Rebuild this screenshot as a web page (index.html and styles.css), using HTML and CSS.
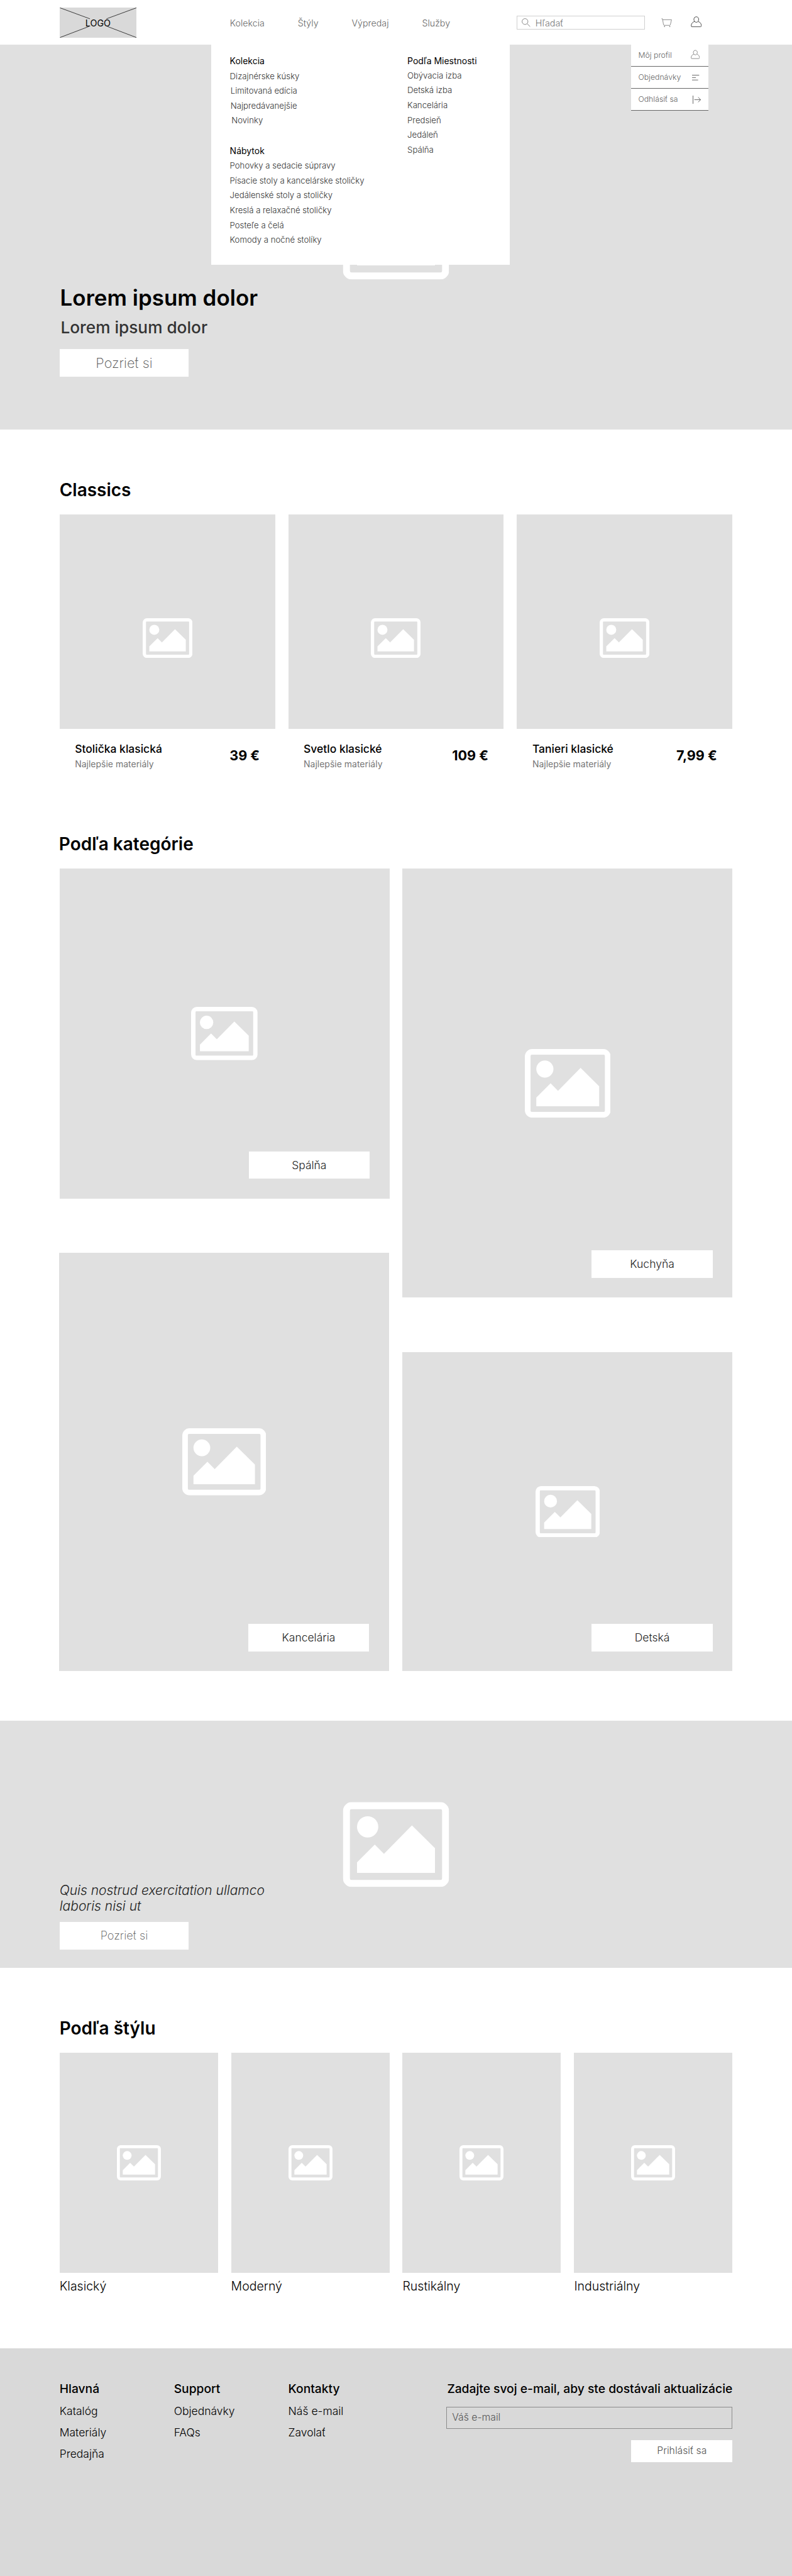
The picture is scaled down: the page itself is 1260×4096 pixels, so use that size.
FILE: index.html
```html
<!DOCTYPE html>
<html lang="sk">
<head>
<meta charset="utf-8">
<title>Nábytok</title>
<link rel="stylesheet" href="styles.css">
</head>
<body>
<svg class="defs" aria-hidden="true">
  <symbol id="picture" viewBox="0 0 15 12">
    <path fill="#fff" fill-rule="evenodd" d="M1.3 0H13.7A1.3 1.3 0 0 1 15 1.3V10.7A1.3 1.3 0 0 1 13.7 12H1.3A1.3 1.3 0 0 1 0 10.7V1.3A1.3 1.3 0 0 1 1.3 0ZM1.2 1A.2.2 0 0 0 1 1.2V10.8A.2.2 0 0 0 1.2 11H13.8A.2.2 0 0 0 14 10.8V1.2A.2.2 0 0 0 13.8 1Z"/>
    <circle cx="3.5" cy="3.5" r="1.5" fill="#fff"/>
    <path fill="#fff" d="M2 8.5 4.5 6 5.8 7.3 9.75 3.3 13 6.5V10H2Z"/>
  </symbol>
  <symbol id="user" viewBox="0 0 20 20">
    <path fill="none" stroke="currentColor" d="M10 .8C7.4 .8 5.6 2.9 5.6 5.5S7.4 10.8 10 10.8 14.400 8.100 14.400 5.5 12.600 .8 10 .8ZM6.600 9.600C2.800 10.300 .8 13.500 .8 17.300 .8 18.300 1.300 19 2.300 19H17.700C18.700 19 19.200 18.300 19.200 17.300 19.200 13.500 17.200 10.300 13.400 9.600"/>
  </symbol>
</svg>

<header class="header">
  <div class="wrap header-row">
    <a class="logo">
      <svg class="logo-lines" viewBox="0 0 140 55"><path d="M.5 .5 55 20.500M139.500 .5 85 20.500M.5 54.500 53 34.500M139.500 54.500 87 34.500" stroke="#222" fill="none"/></svg>
      <span>LOGO</span>
    </a>
    <nav class="nav"><a>Kolekcia</a><a>Štýly</a><a>Výpredaj</a><a>Služby</a></nav>
    <div class="search">
      <svg class="search-icon" viewBox="0 0 16 16"><circle cx="6" cy="6" r="5.300"/><path d="M9.800 9.800 15.300 15.300"/></svg>
      <span>Hľadať</span>
    </div>
    <svg class="cart-icon" viewBox="0 0 20 16"><path d="M.5 1H2.300L4 11.300Q4.300 12.900 5.700 12.900H15.200Q16.200 12.900 16.500 11.900L18.700 2.700H2.700"/><circle class="dot" cx="6" cy="15" r="1"/><circle class="dot" cx="15.500" cy="15" r="1"/></svg>
    <svg class="user-icon"><use href="#user"/></svg>
  </div>

  <div class="mega">
    <div class="mega-col">
      <h4>Kolekcia</h4>
      <a>Dizajnérske kúsky</a><a class="in1">Limitovaná edícia</a><a class="in1">Najpredávanejšie</a><a class="in2">Novinky</a>
      <h4 class="second">Nábytok</h4>
      <a>Pohovky a sedacie súpravy</a><a>Písacie stoly a kancelárske stoličky</a><a>Jedálenské stoly a stoličky</a><a>Kreslá a relaxačné stoličky</a><a>Posteľe a čelá</a><a>Komody a nočné stolíky</a>
    </div>
    <div class="mega-col rooms">
      <h4>Podľa Miestnosti</h4>
      <a>Obývacia izba</a><a>Detská izba</a><a>Kancelária</a><a>Predsieň</a><a>Jedáleň</a><a>Spálňa</a>
    </div>
  </div>

  <div class="account">
    <a><span>Môj profil</span><svg class="i-user"><use href="#user"/></svg></a>
    <a><span>Objednávky</span><svg class="i-list" viewBox="0 0 13 10"><path d="M0 .6H13M0 5H7M0 9.400H11"/></svg></a>
    <a><span>Odhlásiť sa</span><svg class="i-out" viewBox="0 0 15 15"><path d="M.6 0V15M3 7.500H14.500M10 3 14.500 7.500 10 12"/></svg></a>
  </div>
</header>

<section class="hero">
  <svg class="pic"><use href="#picture"/></svg>
  <div class="wrap hero-text">
    <h1>Lorem ipsum dolor</h1>
    <h2>Lorem ipsum dolor</h2>
    <a class="cta big">Pozrieť si</a>
  </div>
</section>

<section class="wrap classics">
  <h3>Classics</h3>
  <div class="products">
    <article><div class="thumb"><svg class="pic"><use href="#picture"/></svg></div><div class="info"><div class="label"><b>Stolička klasická</b><small>Najlepšie materiály</small></div><strong>39 €</strong></div></article>
    <article><div class="thumb"><svg class="pic"><use href="#picture"/></svg></div><div class="info"><div class="label"><b>Svetlo klasické</b><small>Najlepšie materiály</small></div><strong>109 €</strong></div></article>
    <article><div class="thumb"><svg class="pic"><use href="#picture"/></svg></div><div class="info"><div class="label"><b>Tanieri klasické</b><small>Najlepšie materiály</small></div><strong>7,99 €</strong></div></article>
  </div>
</section>

<section class="wrap categories">
  <h3>Podľa kategórie</h3>
  <div class="cat-grid">
    <div class="cat-col">
      <div class="cat bedroom"><svg class="pic"><use href="#picture"/></svg><a>Spálňa</a></div>
      <div class="cat office"><svg class="pic"><use href="#picture"/></svg><a>Kancelária</a></div>
    </div>
    <div class="cat-col">
      <div class="cat kitchen"><svg class="pic"><use href="#picture"/></svg><a>Kuchyňa</a></div>
      <div class="cat kids"><svg class="pic"><use href="#picture"/></svg><a>Detská</a></div>
    </div>
  </div>
</section>

<section class="banner">
  <svg class="pic"><use href="#picture"/></svg>
  <div class="wrap banner-text">
    <p>Quis nostrud exercitation ullamco<br>laboris nisi ut</p>
    <a class="cta">Pozrieť si</a>
  </div>
</section>

<section class="wrap looks">
  <h3>Podľa štýlu</h3>
  <div class="look-grid">
    <figure><div class="thumb"><svg class="pic"><use href="#picture"/></svg></div><figcaption>Klasický</figcaption></figure>
    <figure><div class="thumb"><svg class="pic"><use href="#picture"/></svg></div><figcaption>Moderný</figcaption></figure>
    <figure><div class="thumb"><svg class="pic"><use href="#picture"/></svg></div><figcaption>Rustikálny</figcaption></figure>
    <figure><div class="thumb"><svg class="pic"><use href="#picture"/></svg></div><figcaption>Industriálny</figcaption></figure>
  </div>
</section>

<footer class="footer">
  <div class="wrap footer-row">
    <div class="links"><h5>Hlavná</h5><a>Katalóg</a><a>Materiály</a><a>Predajňa</a></div>
    <div class="links"><h5>Support</h5><a>Objednávky</a><a>FAQs</a></div>
    <div class="links"><h5>Kontakty</h5><a>Náš e-mail</a><a>Zavolať</a></div>
    <form class="signup"><h5>Zadajte svoj e-mail, aby ste dostávali aktualizácie</h5><div class="field">Váš e-mail</div><a class="submit">Prihlásiť sa</a></form>
  </div>
</footer>
</body>
</html>
```
FILE: styles.css
```css
/* 1rem is ten design units of the 1440-wide layout */
html { font-size: 8.7465px; }
* { box-sizing: border-box; margin: 0; padding: 0; }
body { background: #fff; color: #000; font: 400 1.6rem/1.2 Inter, "Liberation Sans", sans-serif; overflow-x: hidden; }
svg { display: block; flex: none; }
.defs { position: absolute; width: 0; height: 0; }
.wrap { width: 122.4rem; margin: 0 auto; }
a { white-space: nowrap; }
.pic { width: 19.34rem; height: 15.47rem; }

/* header */
.header { position: relative; z-index: 2; height: 8.1rem; background: #fff; }
.header-row { display: flex; align-items: center; height: 8.3rem; }
.logo { position: relative; display: flex; align-items: center; justify-content: center; width: 14rem; height: 5.5rem; background: #d9d9d9; font-size: 1.64rem; }
.logo-lines { position: absolute; inset: 0; width: 100%; height: 100%; }
.logo span { position: relative; }
.nav { display: flex; gap: 6.05rem; margin-left: 17rem; width: 52.2rem; font-size: 1.63rem; font-weight: 300; color: #666; }
.search { display: flex; align-items: center; gap: .95rem; width: 23.3rem; height: 2.5rem; padding-left: .7rem; border: 1px solid #d0d0d0; font-size: 1.64rem; font-weight: 300; color: #777; }
.search-icon { width: 1.6rem; height: 1.6rem; fill: none; stroke: #777; }
.cart-icon { width: 2rem; height: 1.6rem; margin: -.1rem 0 0 2.9rem; fill: none; stroke: #808080; }
.cart-icon .dot { fill: #808080; stroke: none; }
.user-icon { width: 2rem; height: 2rem; margin: -.3rem 0 0 3.4rem; color: #333; }

/* open menus */
.mega { position: absolute; left: 38.4rem; top: 8.1rem; display: flex; width: 54.3rem; height: 40rem; padding: 1.6rem 0 0 3.4rem; background: #fff; }
.mega-col { display: flex; flex: none; flex-direction: column; width: 32.3rem; font-size: 1.51rem; font-weight: 300; color: #333; line-height: 2.7rem; }
.mega-col.rooms { width: 16rem; }
.mega h4 { font-size: 1.6rem; font-weight: 400; color: #000; padding-bottom: .13rem; }
.mega .rooms h4 { padding-bottom: .05rem; }
.mega .second { margin-top: 2.8rem; padding: 0; }
.in1 { padding-left: .13rem; }
.in2 { padding-left: .3rem; }
.account { position: absolute; left: 114.8rem; top: 8.1rem; width: 14.1rem; }
.account a { display: flex; align-items: center; justify-content: space-between; height: 4rem; padding: .1rem 1.6rem 0 1.3rem; background: #fff; border-bottom: 1px solid #666; font-size: 1.4rem; font-weight: 300; color: #666; }
.account svg { fill: none; stroke: #555; color: #666; }
.account .i-user { width: 1.65rem; height: 1.75rem; margin-top: -.3rem; stroke: none; }
.i-list { width: 1.3rem; height: 1rem; margin-right: .1rem; }
.i-out { width: 1.5rem; height: 1.5rem; margin-right: -.2rem; }

/* hero */
.hero { position: relative; display: flex; flex-direction: column; justify-content: flex-end; height: 70rem; padding-bottom: 9.6rem; background: #e0e0e0; }
.hero > .pic, .banner > .pic { position: absolute; left: 50%; top: 50%; transform: translate(-50%, -50%); }
h1 { margin-left: .1rem; font-size: 4rem; line-height: 4.8rem; font-weight: 600; }
h2 { margin: 1.2rem 0 2.2rem .2rem; font-size: 3rem; line-height: 3.6rem; font-weight: 500; color: #333; }
.cta { display: flex; align-items: center; justify-content: center; width: 23.5rem; height: 5rem; background: #fff; font-size: 2.08rem; font-weight: 200; color: #555; }
.cta.big { font-size: 2.48rem; }

/* product cards */
h3 { font-size: 3.2rem; line-height: 4rem; font-weight: 600; }
.thumb { display: flex; align-items: center; justify-content: center; background: #e0e0e0; }
.classics { padding-top: 9rem; height: 73.2rem; }
.products { display: grid; grid-template-columns: repeat(3, 1fr); gap: 2.4rem; margin-top: 2.4rem; }
.products .thumb { height: 39rem; padding-top: 6rem; }
.products .pic { width: 9.05rem; height: 7.24rem; }
.info { display: flex; align-items: center; justify-content: space-between; height: 9.9rem; padding: 0 2.8rem; }
.label { padding-top: .15rem; }
.info b { display: block; font-size: 2rem; line-height: 2.6rem; font-weight: 500; }
.info small { display: block; font-size: 1.6rem; line-height: 2.65rem; font-weight: 400; color: #777; }
.info strong { font-size: 2.47rem; font-weight: 700; }

/* categories */
.categories { height: 161.5rem; padding-top: .2rem; }
.categories h3 { margin-left: -.1rem; }
.cat-grid { display: grid; grid-template-columns: 60rem 60rem; gap: 2.4rem; margin-top: 2.4rem; }
.cat-col { display: flex; flex-direction: column; gap: 9.9rem; }
.cat { position: relative; display: flex; align-items: center; justify-content: center; background: #e0e0e0; }
.cat a { position: absolute; right: 3.6rem; bottom: 3.6rem; display: flex; align-items: center; justify-content: center; width: 22rem; height: 5rem; background: #fff; font-size: 2rem; font-weight: 300; color: #222; }
.bedroom { height: 60rem; }
.bedroom .pic { width: 12.1rem; height: 9.68rem; }
.office { height: 76rem; margin: 0 .1rem 0 -.1rem; }
.office .pic { width: 15.25rem; height: 12.2rem; }
.kitchen { height: 78rem; }
.kitchen .pic { width: 15.6rem; height: 12.48rem; }
.kids { height: 58rem; }
.kids .pic { width: 11.7rem; height: 9.36rem; }

/* banner */
.banner { position: relative; display: flex; flex-direction: column; justify-content: flex-end; height: 45rem; padding-bottom: 3.4rem; background: #e0e0e0; }
.banner p { margin-bottom: 1.45rem; font-size: 2.4rem; line-height: 2.9rem; font-weight: 300; font-style: italic; color: #222; }

/* styles */
.looks { height: 69.1rem; padding-top: 9rem; }
.look-grid { display: grid; grid-template-columns: repeat(4, 1fr); gap: 2.4rem; margin-top: 2.4rem; }
.look-grid .thumb { height: 40rem; }
.look-grid .pic { width: 8rem; height: 6.4rem; }
figcaption { margin-top: 1rem; font-size: 2.23rem; line-height: 2.8rem; font-weight: 300; }

/* footer */
.footer { height: 41.4rem; padding-top: 6.2rem; background: #d9d9d9; }
.footer-row { display: flex; }
.links { display: flex; flex: none; flex-direction: column; width: 20.8rem; font-size: 2rem; font-weight: 300; line-height: 3.9rem; }
h5 { font-size: 2.2rem; line-height: 2.4rem; font-weight: 500; white-space: nowrap; }
.links h5 { margin-bottom: .9rem; }
.signup { display: flex; flex-direction: column; align-items: flex-end; width: 52rem; margin-left: auto; font-size: 1.8rem; font-weight: 300; color: #555; }
.signup h5 { color: #000; }
.field { display: flex; align-items: center; width: 100%; height: 4rem; margin-top: 2.1rem; padding-left: .9rem; border: 1px solid #8c8c8c; }
.submit { display: flex; align-items: center; justify-content: center; width: 18.4rem; height: 4rem; margin-top: 2rem; background: #fff; }
```
